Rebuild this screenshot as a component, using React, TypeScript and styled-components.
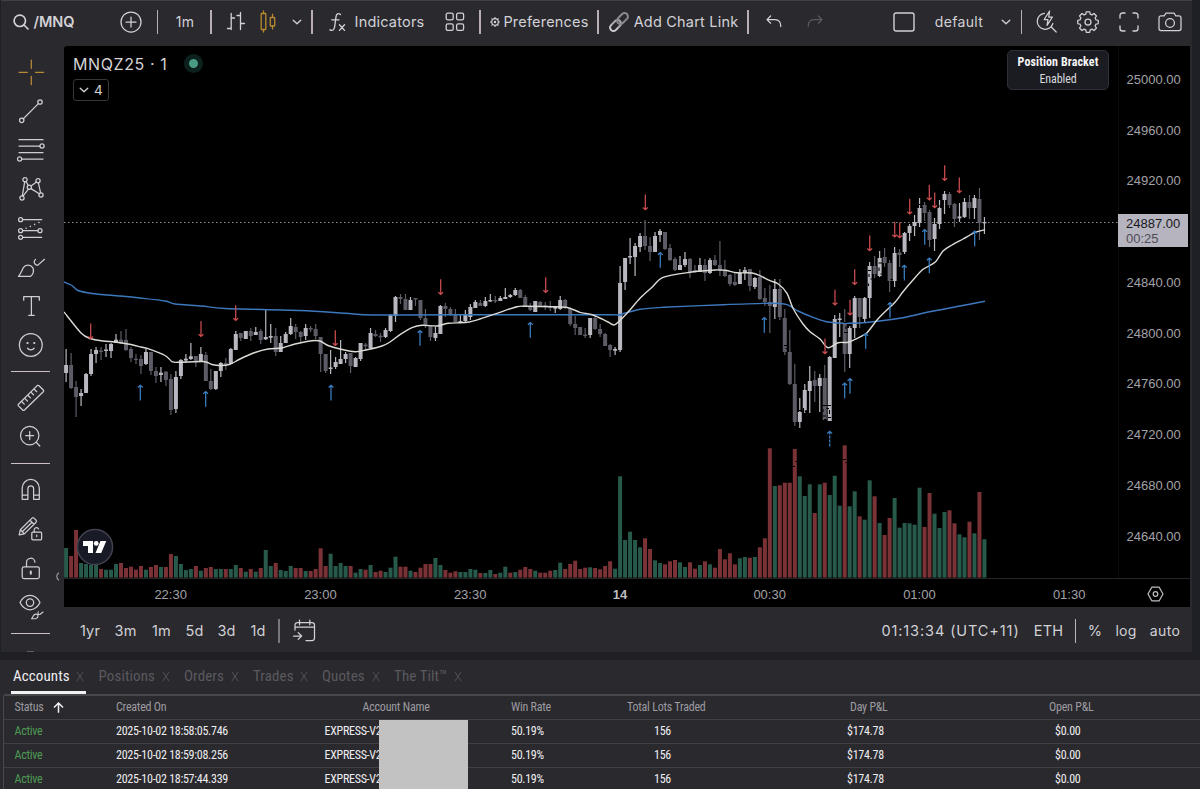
import React from "react";
import styled, { createGlobalStyle } from "styled-components";

const UI = `Inter, "Liberation Sans", sans-serif`;
const AXIS = `"Liberation Sans", Arial, sans-serif`;
const COND = `"Roboto Condensed", Roboto, sans-serif`;

const GlobalStyle = createGlobalStyle`
  *, *::before, *::after { box-sizing: border-box; }
  body { margin: 0; background: #1f2026; overflow: hidden; }
  svg { display: block; }
`;

const Page = styled.div`
  width: 1200px;
  height: 789px;
  display: flex;
  flex-direction: column;
  gap: 8px;
  overflow: hidden;
  background: #1f2026;
  color: #d6d5da;
  font-family: ${UI};
`;

const ChartPanel = styled.section`
  flex: none;
  width: 1191px;
  height: 652px;
  margin-left: 1px;
  display: flex;
  flex-direction: column;
  background: #2a292e;
  border-top: 1px solid #414045;
  overflow: hidden;
`;

const Toolbar = styled.header`
  flex: none;
  height: 45px;
  display: flex;
  align-items: center;
  padding: 0 0 4px 12px;
`;

const Slot = styled.div<{ $w: number; $ml?: number; $dim?: boolean }>`
  flex: none;
  width: ${(p) => p.$w}px;
  height: 28px;
  margin-left: ${(p) => p.$ml ?? 0}px;
  display: flex;
  align-items: center;
  justify-content: center;
  white-space: nowrap;
  color: ${(p) => (p.$dim ? "#5b5a60" : "#d2d1d6")};
`;

const ToolText = styled.span<{ $size?: number; $weight?: number; $ls?: number }>`
  font-size: ${(p) => p.$size ?? 14.5}px;
  font-weight: ${(p) => p.$weight ?? 400};
  letter-spacing: ${(p) => p.$ls ?? 0.2}px;
  line-height: 20px;
`;

const Divider = styled.i<{ $ml: number; $color?: string }>`
  flex: none;
  width: 1.5px;
  height: 24px;
  margin-left: ${(p) => p.$ml}px;
  background: ${(p) => p.$color ?? "#b9adb7"};
`;

const Body = styled.div`
  flex: 1;
  display: flex;
  min-height: 0;
`;

const Sidebar = styled.nav`
  position: relative;
  flex: none;
  width: 63px;
  padding: 6.5px 4px 0 0;
  display: flex;
  flex-direction: column;
  align-items: center;
`;

const Tool = styled.div<{ $accent?: boolean }>`
  flex: none;
  height: 39px;
  display: flex;
  align-items: center;
  color: ${(p) => (p.$accent ? "#b88a35" : "#cfced3")};
`;

const ToolRule = styled.i`
  flex: none;
  width: 39px;
  height: 1.5px;
  margin: 6px 0 6.5px;
  background: #cbbfca;
`;

const MoreStub = styled.i`
  flex: none;
  width: 7px;
  height: 1.5px;
  margin-top: 10px;
  background: #5f5e64;
`;

const CollapseMark = styled.div`
  position: absolute;
  left: 53px;
  top: 526px;
  color: #a3a2a8;
`;

const Main = styled.main`
  flex: 1;
  display: flex;
  flex-direction: column;
  min-width: 0;
`;

const ChartBox = styled.div`
  flex: none;
  width: 1126px;
  height: 561px;
  display: grid;
  grid-template-columns: 1054px 72px;
  grid-template-rows: 532px 29px;
  background: #000;
  border-radius: 3px 0 0 0;
  overflow: hidden;
`;

const Plot = styled.div`
  position: relative;
`;

const Legend = styled.div`
  position: absolute;
  left: 9px;
  top: 7px;
`;

const SymbolLine = styled.div`
  display: flex;
  align-items: center;
  height: 21px;
  font-size: 16px;
  letter-spacing: 0.6px;
  color: #d4d3d6;
`;

const LiveDot = styled.i`
  width: 19px;
  height: 19px;
  margin-left: 17px;
  border-radius: 50%;
  border: 5px solid #0c211d;
  background: #489a83;
`;

const IndicatorCount = styled.div`
  display: flex;
  align-items: center;
  gap: 5px;
  width: 36px;
  height: 22px;
  margin-top: 5px;
  padding-left: 5px;
  border: 1px solid #37363b;
  border-radius: 3px;
  font-size: 13.5px;
  color: #d4d3d6;
`;

const BracketBadge = styled.div`
  position: absolute;
  left: 943px;
  top: 4px;
  width: 102px;
  height: 40px;
  display: flex;
  flex-direction: column;
  align-items: center;
  justify-content: center;
  border: 1.5px solid #2f2f37;
  border-radius: 5px;
  background: #1b1b22;
  font-family: ${COND};
  font-stretch: 75%;
  font-size: 12px;
  line-height: 16.5px;
  letter-spacing: -0.1px;
  padding-top: 1px;
  color: #d9d9dc;
`;

const BadgeTitle = styled.strong`
  font-weight: 700;
  letter-spacing: 0.1px;
  color: #f4f4f5;
`;

const BrandMark = styled.div`
  position: absolute;
  left: 11.5px;
  top: 482px;
`;

const PriceAxis = styled.div`
  position: relative;
  display: grid;
  grid-template-rows: repeat(10, 50.75px);
  align-content: start;
  padding: 8px 0 0 7.5px;
  border-left: 1px solid #0c0c0e;
  font-family: ${AXIS};
  font-size: 13px;
  color: #a3a2a7;
`;

const PriceLabel = styled.span`
  display: flex;
  align-items: center;
`;

const PriceTag = styled.div`
  position: absolute;
  left: -1px;
  top: 167.5px;
  width: 70px;
  height: 33px;
  padding: 2px 0 0 8px;
  background: #b6b4bf;
  font-size: 13px;
  line-height: 15px;
  color: #19191d;
`;

const Countdown = styled.div`
  font-size: 13px;
  color: #4e4d57;
`;

const TimeAxis = styled.div`
  display: grid;
  grid-template-columns: repeat(7, 149.75px);
  padding-left: 31.8px;
  border-top: 1px solid #26252a;
  font-family: ${AXIS};
  font-size: 13px;
  color: #a3a2a7;
  overflow: visible;
`;

const TimeLabel = styled.span<{ $bold?: boolean }>`
  display: flex;
  align-items: center;
  justify-content: center;
  padding-top: 2px;
  font-weight: ${(p) => (p.$bold ? 700 : 400)};
  color: ${(p) => (p.$bold ? "#bdbcc0" : "inherit")};
`;

const AxisCorner = styled.div`
  display: flex;
  align-items: center;
  justify-content: center;
  padding: 2px 0 0 3px;
  border-top: 1px solid #26252a;
  color: #bcbbc0;
`;

const RangeBar = styled.footer`
  flex: 1;
  display: flex;
  align-items: center;
  padding: 2px 1px 0 12px;
`;

const Spacer = styled.div`
  flex: 1;
`;

const TablePanel = styled.section`
  flex: 1;
  display: flex;
  flex-direction: column;
  background: #2a292e;
  font-family: ${COND};
  font-stretch: 75%;
`;

const Tabs = styled.div`
  flex: none;
  height: 34px;
  display: flex;
  padding-left: 11px;
`;

const Tab = styled.div<{ $w: number; $active?: boolean }>`
  flex: none;
  width: ${(p) => p.$w}px;
  padding: 1px 2px 0;
  display: flex;
  align-items: center;
  justify-content: space-between;
  border-bottom: 3px solid ${(p) => (p.$active ? "#f1f0f3" : "transparent")};
  margin-right: 10.5px;
  font-size: 15px;
  letter-spacing: 0.1px;
  white-space: nowrap;
  color: ${(p) => (p.$active ? "#efeef1" : "#5a595f")};
`;

const Close = styled.span`
  color: #58575d;
  display: flex;
  padding-top: 1px;
`;

const Table = styled.div`
  position: relative;
  flex: 1;
  margin-left: 3px;
  border: 1.5px solid #48474c;
  border-width: 2px 0 0 1.5px;
  border-radius: 3px 0 0 0;
`;

const Row = styled.div<{ $head?: boolean }>`
  height: 24px;
  display: grid;
  grid-template-columns: 101.5px 208.5px 186.5px 116px 220px 202px 1fr;
  align-items: center;
  padding: 0 0 1px 10.5px;
  border-bottom: 1.5px solid #414045;
  font-size: 12px;
  letter-spacing: ${(p) => (p.$head ? -0.22 : -0.27)}px;
  color: ${(p) => (p.$head ? "#9c9ba0" : "#efeef1")};
`;

const Cell = styled.span<{ $pad?: number; $good?: boolean }>`
  display: flex;
  align-items: center;
  gap: 9px;
  padding-left: ${(p) => p.$pad ?? 0}px;
  white-space: nowrap;
  color: ${(p) => (p.$good ? "#4f9a54" : "inherit")};
`;

const Redaction = styled.div`
  position: absolute;
  left: 374.5px;
  top: 24px;
  width: 89.5px;
  height: 80px;
  background: #c2c2c2;
`;

type IconProps = { w?: number; h?: number; vb?: string; sw?: number; children: React.ReactNode };
const Icon = ({ w = 28, h = 28, vb, sw = 1.25, children }: IconProps) => (
  <svg width={w} height={h} viewBox={vb ?? `0 0 ${w} ${h}`} fill="none" stroke="currentColor" strokeWidth={sw} strokeLinecap="round" strokeLinejoin="round">
    {children}
  </svg>
);

const Chevron = () => (
  <Icon w={10} h={6} sw={1.3}>
    <path d="M1.2 1.2 5 4.8 8.8 1.2" />
  </Icon>
);

const sideTools: React.ReactNode[][] = [
  [
    <path d="M2 14.3H10.3M18.5 14.3H26.7M14.3 2V10.3M14.3 18.3V26.7" />,
    <>
      <circle cx="4.7" cy="23.3" r="2.2" /><circle cx="23" cy="5" r="2.2" /><path d="M6.3 21.7 21.4 6.6" />
    </>,
    <>
      <path d="M2 3.7H26M2 10H23M2 16.7H26M4.7 23H26" /><circle cx="25" cy="10" r="2.1" /><circle cx="2.6" cy="23" r="2.1" />
    </>,
    <>
      <circle cx="8" cy="4.7" r="2.1" /><circle cx="21" cy="5.7" r="2.1" /><circle cx="12.3" cy="12.3" r="2.1" /><circle cx="5" cy="23" r="2.1" /><circle cx="24" cy="20" r="2.1" />
      <path d="M7.7 6.8 5.3 20.9M9.1 6.5 11.3 10.5M14 11 19.4 7M11.4 14.2 6 21.1M14 13.6 22.3 18.8M21.4 7.8 23.6 17.9" />
    </>,
    <>
      <circle cx="3.6" cy="5.7" r="2" /><circle cx="3.6" cy="16.7" r="2" /><circle cx="3.6" cy="23.3" r="2" /><circle cx="23" cy="16.7" r="2" />
      <path d="M5.6 5.7H24.7M5.6 16.7H21M5.6 23.3H24.7" /><path d="M9 14.3 23 8" strokeDasharray="0.1 4.6" strokeWidth="1.5" />
    </>,
    <>
      <path d="M1.5 23.4C4 20.5 4.6 17.8 6.3 14.7C8.6 11 13.6 11.3 15.7 14.6C17.6 18 16 21.6 13.4 23.4Z" />
      <path d="M18.5 6.4C16.4 8.5 16.8 11.6 20.6 12.4L27.5 6.3" />
    </>,
    <path d="M6.7 8.2V4.7H22.3V8.2M14.4 4.7V23.3M11.7 23.3H17.2" />,
    <>
      <circle cx="13.8" cy="14" r="11.4" /><path d="M10.5 17.2C12 19.4 15.7 19.4 17.2 17.2" /><path d="M10.5 12H10.6M17.2 12H17.3" strokeWidth="2.2" />
    </>,
  ],
  [
    <>
      <path d="M20.4 1.4Q21.2 1 22 1.8L26.3 6Q27 6.9 26.3 7.7L7.5 26Q6.5 26.8 5.7 26L1.5 21.9Q.8 21 1.5 20.2Z" />
      <path d="M4.9 17.7 7.3 20.1M8 14.6 10.4 17M11.1 11.5 13.5 13.9M14.2 8.4 16.6 10.8M17.3 5.3 19.7 7.7" />
    </>,
    <>
      <circle cx="12.7" cy="12.6" r="9.2" /><path d="M12.7 8.6V16.6M8.7 12.6H16.7M19.2 19.3 22.8 23" />
    </>,
  ],
  [
    <path d="M5.2 23.3V12A8.55 8.55 0 0 1 22.3 12V23.3H16.6V12.2A2.9 2.9 0 0 0 10.9 12.2V23.3ZM5.2 19H10.9M16.6 19H22.3" />,
    <>
      <path d="M2.2 19.8 3.3 14.8 15 3.1Q16 2.2 17 3.1L19.1 5.2Q20 6.2 19.1 7.2L7.3 18.9ZM13 5.2 17 9.2M3.3 14.8 7.3 18.9M5.2 16.8 15 7.2" />
      <rect x="14.8" y="17" width="9.8" height="7.8" rx="1" /><path d="M17.2 17V14.8A2.3 2.3 0 0 1 21.6 14M19.7 20.2V21.6" />
    </>,
    <>
      <rect x="5.2" y="12.8" width="17.1" height="11.8" rx="1.8" /><path d="M9.5 12.6V8.7A4.2 4.2 0 0 1 17.9 8.2" /><path d="M13.8 17.6V19.8" strokeWidth="2" />
    </>,
    <>
      <path d="M3 9.6C7.6 0 18.4 0 23 9.6C18.4 19.2 7.6 19.2 3 9.6Z" /><circle cx="13" cy="9.6" r="3.7" />
      <path d="M14.5 25.8C16.3 24 16 21.5 18.5 21.1C21.8 21 22 24.6 18.8 25.6ZM21.2 18.7C20.5 21 22 22 23.2 21.2L26 19" strokeWidth="1.1" />
    </>,
  ],
];

/* One entry per minute: direction (l rising, d falling), high, body top, body bottom, low. */
const CANDLES = `
l349,365,373,382 d353,365,388,389 d381,387,397,417 l389,393,396,406 l373,374,393,393 l349,354,374,376 l347,350,354,363 d347,350.5,352,360
l344,349.5,351,357 l343,344,351,358 l334,339.7,343,343 d331,339.7,343.3,344 d329,340,350,351 d347,349,358,362 d354,358.7,360,364 d355,359,366,374
l349,352,364,365 d352,352,371,375 d367,371,376,383 l367,372.7,375,382 d371,371.7,380,386 d374,379,410,415 l371,377,409,413 l359,360,376,379
l354,358.7,360.5,363 l343,356.3,359,360 d356,356,362,367 l347,354,362,362 d352,355,381,381 d369,381,389,390 l371,371,389,390 l362,363,371,377
d358,363,365,370 l348,349,364,364 l331,334,350,350 d333,333,338,341 l331,331,339,339 d328,331,336,341 l327,332,335,335 d329,331,340,344
l310,337,339.3,340 l324,336,337.7,343 d328,336,352,356 l336,343,352,352 l332,334,343,343 l318,326,334,335 d324,327,332,339 d331,332,337,343
l324,328,336,340 d326,328,329.5,332 d324,329,336,339 d337,337,354,372 d354,354,371,373 l350,367.5,369,374 l357,362,367,369 l340,359,364,364
l352,354,359,363 d353,353,366,373 l357,358,367,367 l343,343,359,361 d343,344.5,346.3,351 l328,333,348,348 d330,334,336,337 d333,335.7,337.3,342
l328,330,337,338 l314,315,331,332 l296,297,316,322 d294,297,299,304 d294,299,310,310 l297,300,310,310 d298,298,299.5,306 d300,300,318,320
d309,318,326,328 d326,326,337,341 l327,333,338,341 l305,306,334,334 d303,306,309,317 d307,309,314,316 d309,314,322,322 l314,321,323,323
l310,315,321,322 l304,307,317,320 l300,302,308,308 d300,303,306,306 l297,301,306,307 l294,300,301.5,302 d296,300,301.3,303 l296,298,301,301
l288,297,299,299 l294,295,297,298 l288,290,295,296 d289,290,298,298 d295,297,306,306 d303,306,310,311 l301,301,312,312 d301,302,306,306
d302,305,306.7,310 d301,306,308,311 l306,307,308.7,313 l296,300,309,310 d299,300,307,309 d307,308,324,326 d316,324,328,335 d327,327,335,335
d328,334.5,336,338 l318,318,335,338 d315,318,329,330 d324,329,334,337 d333,334,346,346 d344,345,350,357 l347,349,350.7,355 l266,283,350,352
l258,258,282,290 l238,256,257.5,264 l243,246,257,276 l233,236,247,252 d220,236,246,250 d237,246,252,261 l232,236,252,252 l229,231,235,242
d232,232,249,250 d244,248,260,261 d257,259,270,271 l256,265,270,270 l252,259,265,267 d258,259,272,278 d265,270,272,273 l258,265,272,272
d259,265,273,281 l258,260,273,274 d255,260,265,266 d241,265,271,276 d260,270,276,277 d274,275,284,286 d273,282,285,286 l269,273,284,284
l267,270,273,280 d269,269,286,291 l277,278,287,289 d270,277,299,300 d288,298,302,306 d285,302,306,333 l279,289,307,319 d279,289,317,320
d309,318,352,355 d330,352,384,385 d364,384,422,426 l398,412,422,428 l384,390,410,413 l366,381,391,413 d371,380,386,402 l374,378,386,412
d365,378,420,420 l356,357,421,421 l315,319,358,358 l313,318.5,320,337 d309,322,354,372 l326,328,354,368 l296,298,328,338 d298,298,317,328
l297,298,319,323 l262,266,298,318 d256,266,274,278 l251,258,276,277 d248,257,263,267 d260,263,281,292 l247,253,281,287 d249,252.5,255,267
l232,233,252,254 l224,226,233,241 l215,222,226,236 l198,208,223,227 d202,205,213,221 d210,212,240,247 l218,224,239,251 l200,208,224,229
l191,194,200,214 d192,194,205,208 d203,204,219,227 l203,216.5,218.3,222 l198,202,217,218 d195,202,208,219 l195,198,208,219 d188,199,223,240
l217,222,223.3,234`;

/* One entry per minute: bar colour (g up, r down) and the y of its top. */
const VOLUMES = `
g548 r556 r530 g563 g564 g565 g565 r569 g569.7 g569.7 g564 r563 r568 r566.7 r569.7 r566 g569.7 r567 r565 g567 r567 r554 g556 g564 g570 g569
r566 g570.7 r568 r567 g569 g569 r569 g569 g565 r568 g571.7 r569 g571.7 r568 g550 g566 r563 g570 g571 g566 r568 r568 g571 r571 r569 r548.3
r566 g553.7 g566 g563 g566 r566 g572.7 g569 r569.7 g565 r572 r570.7 g572 g567.7 g556.7 r566.7 r566.7 g570.7 r572 r567.7 r564 r564 g558 g565
r570 r572.7 r571.3 g572 g572 g569 g569.7 r573 g573 g570 r574 g572.7 g566.7 r572.7 g572 r569.7 r567 r569 g570.7 r572.7 r572.7 r570.7 g570
g562.7 r569 r564 r560.7 r569 r567.7 g567.3 r568 r569.3 r566 r561.3 g568.7 g476.3 g540 g531.7 g540 g547.3 r538.3 r549 g560.3 g563 r564.3
r561.3 r560 g562.3 g567 r562.3 r568.7 g565 r561.3 g564.3 r567.7 r549 r559.3 r553.3 r564.3 g558.3 g557 r557.7 g557 r547.3 r538.3 r448.3 g486
r485.3 r482.7 r482.7 r449 g476.3 g496 g484.3 r513 g484.3 r482.7 g495 g475.7 g505.7 r445.3 g506.3 g491.3 r516.3 g519.7 g480.3 r496.3 g523
r535 r518 g498 g527.7 g523 g523.3 g524.7 g487.7 r527 r493 g513.7 g528 g512 r510.3 r523.3 g534.3 g537.3 r521.7 g533.3 r492 g539.3`;

const SLOW_AVG: number[][] = [[64,282],[72,285.5],[78,290.5],[92,293.5],[120,296],[140,298],[165,301],[175,304],[202,306],[225,308.5],[300,310.5],[345,313.3],[373,315],[450,314.8],[610,314.7],[618,315],[640,309.3],[663,307.3],[723,304.7],[770,303.3],[787,304.7],[798,311],[813,317.3],[828,322],[850,323.3],[873,321.7],[903,317.7],[927,312.3],[960,306],[985,301.3]];
const FAST_AVG: number[][] = [[64,312],[81,333],[90,338.5],[103,341],[115,342],[128,344],[141,347],[148,348.7],[165,355.5],[172,361.6],[178,362.3],[203,361.5],[212,364.5],[220,365.5],[230,364.3],[240,359],[255,352.5],[268,349],[282,348],[295,344],[312,340.7],[320,341],[328,345.5],[338,348.5],[355,351.7],[367,349.7],[382,346],[390,342],[400,334.7],[412,327.7],[422,325.3],[437,326],[448,323.3],[467,322.3],[480,319],[497,313.3],[517,306.7],[527,306.3],[553,306.7],[568,307.7],[580,312.3],[593,315],[608,322],[615,324.7],[627,313.3],[640,298.3],[652,287.3],[663,277.3],[690,272.3],[715,270],[725,270.3],[737,272.7],[752,273],[760,275.7],[770,280.7],[778,283.7],[787,293.3],[793,308.3],[803,324],[810,331.7],[820,339],[828,347.7],[838,342.7],[848,342.3],[858,338],[867,332.7],[877,320],[885,311.7],[895,302.3],[903,291.7],[913,280],[923,269.3],[935,262.3],[943,251],[952,245],[963,239],[975,232.3],[985,229.7]];

const SELLS: number[][] = [[90.7,339],[201,336.7],[235.7,320.7],[335.3,345.7],[440.7,294.7],[545.7,292.7],[645.3,210],[825,354],[835,305.3],[850,315.3],[854.7,284.7],[869.7,251],[894.7,237.3],[899.7,238],[909.7,214.3],[929.3,200.3],[934.7,208],[944.7,180.7],[959.3,193]];
const BUYS: number[][] = [[140.3,385],[205.7,391.3],[331,385],[420,330.3],[530.3,322.3],[660.3,252.3],[764.3,317.3],[829.7,431],[844.7,382.7],[850,378.3],[865.7,333.3],[890,302.3],[904.3,265],[924.7,229.3],[929.3,257.7],[974.7,230.7]];

/* Small dark nicks left over the busiest bars. */
const NICKS = "M822.5 405.5H831M823 409V412M826.5 408.5H829M829.5 410V414M823 416H826M828 417.5H831M824 419.5H826.5M868 270.5H871M869 274V277M870.5 279H873M868.5 283.5V286M878.5 263H882M879 267.5V271M880.5 274H883M784 345.5H787M785.5 348.5H788M788.5 344V349M798 410.5H802M803.5 408V412M805 411.5H808M843.5 322.5H847M844 332.5H848M846 326V329M795.5 461.5H798M793 466.5H795M843 459.5H846M845.5 462.5H847.5M918 204.5H921M920 207.5H923M938 206H941.5M890.5 279.5H893M901 279.5H904M827.5 435H832M827.5 439H832M827.5 443H832";

const STEP = 4.991;
const barX = (i: number) => 66.1 + i * STEP;

const smooth = (pts: number[][]) => {
  let d = `M${pts[0][0]} ${pts[0][1]}`;
  for (let i = 0; i < pts.length - 1; i++) {
    const a = pts[Math.max(i - 1, 0)], b = pts[i], c = pts[i + 1], e = pts[Math.min(i + 2, pts.length - 1)];
    d += `C${b[0] + (c[0] - a[0]) / 7} ${b[1] + (c[1] - a[1]) / 7} ${c[0] - (e[0] - b[0]) / 7} ${c[1] - (e[1] - b[1]) / 7} ${c[0]} ${c[1]}`;
  }
  return d;
};

const candles = CANDLES.trim().split(/\s+/).map((c) => ({ up: c[0] === "l", v: c.slice(1).split(",").map(Number) }));
const volumes = VOLUMES.trim().split(/\s+/).map((c) => ({ up: c[0] === "g", y: Number(c.slice(1)) }));

const PriceChart = () => (
  <svg width="1054" height="532" viewBox="64 46 1054 532">
    {volumes.map((b, i) => (
      <rect key={i} x={barX(i) - 2} y={b.y} width="4" height={577.6 - b.y} fill={b.up ? "#285a4c" : "#7b3236"} />
    ))}
    <line x1="64" x2="1118" y1="222.5" y2="222.5" stroke="#8d8c91" strokeDasharray="1.5 2.5" />
    {candles.map(({ up, v }, i) => (
      <g key={i} fill={up ? "#b9b8c0" : "#5c5b66"}>
        <rect x={barX(i) - 0.6} y={v[0]} width="1.2" height={Math.max(v[3] - v[0], 1)} />
        <rect x={barX(i) - 2} y={v[1]} width="4" height={Math.max(v[2] - v[1], 1)} />
      </g>
    ))}
    <path d={smooth(SLOW_AVG)} fill="none" stroke="#3d78bd" strokeWidth="1.4" />
    <path d={smooth(FAST_AVG)} fill="none" stroke="#dcdbd6" strokeWidth="1.4" />
    {SELLS.map(([x, y], i) => (
      <path key={i} d={`M${x} ${y - 15.5}V${y}M${x - 2.4} ${y - 2.5}L${x} ${y - 0.3}L${x + 2.4} ${y - 2.5}`} fill="none" stroke="#cc4d50" strokeWidth="1.25" />
    ))}
    {BUYS.map(([x, y], i) => (
      <path key={i} d={`M${x} ${y + 15.5}V${y}M${x - 2.4} ${y + 2.5}L${x} ${y + 0.3}L${x + 2.4} ${y + 2.5}`} fill="none" stroke="#3c80c4" strokeWidth="1.25" />
    ))}
    <path d={NICKS} stroke="#000" strokeWidth="1.1" fill="none" />
  </svg>
);

const prices = ["25000.00", "24960.00", "24920.00", "", "24840.00", "24800.00", "24760.00", "24720.00", "24680.00", "24640.00"];
const times = ["22:30", "23:00", "23:30", "14", "00:30", "01:00", "01:30"];
const tabs: [string, number][] = [["Accounts", 75], ["Positions", 75], ["Orders", 58.5], ["Trades", 58.5], ["Quotes", 61.5], ["The Tilt™", 72]];
const created = ["2025-10-02 18:58:05.746", "2025-10-02 18:59:08.256", "2025-10-02 18:57:44.339"];

const gearPath = (() => {
  const teeth = 8;
  let d = "";
  for (let i = 0; i < teeth; i++) {
    const t = (i / teeth) * Math.PI * 2;
    [[-0.27, 8.2], [-0.17, 10.4], [0.17, 10.4], [0.27, 8.2]].forEach(([o, r], j) => {
      d += `${i === 0 && j === 0 ? "M" : "L"}${(12 + r * Math.sin(t + o)).toFixed(2)} ${(12 - r * Math.cos(t + o)).toFixed(2)}`;
    });
  }
  return d + "Z";
})();

export default function App() {
  return (
    <Page>
      <GlobalStyle />
      <ChartPanel>
        <Toolbar>
          <Slot $w={16}>
            <Icon w={16} h={16} sw={1.7}><circle cx="6.8" cy="6.8" r="5.7" /><path d="M11 11 15 15" /></Icon>
          </Slot>
          <Slot $w={42} $ml={4}><ToolText $size={14.5} $weight={600} $ls={0}>/MNQ</ToolText></Slot>
          <Slot $w={22} $ml={45}>
            <Icon w={22} h={22}><circle cx="11" cy="11" r="10" /><path d="M11 6V16M6 11H16" /></Icon>
          </Slot>
          <Divider $ml={14.5} />
          <Slot $w={24} $ml={15}><ToolText $size={14}>1m</ToolText></Slot>
          <Divider $ml={13} />
          <Slot $w={20} $ml={14.5}>
            <Icon w={20} h={22} sw={1.3}><path d="M5.2 2.5V18.5M5.2 7H8.5M1.5 17.5H5.2M14.5 1.5V18.5M11 4.5H14.5M14.5 12.5H18.5" /></Icon>
          </Slot>
          <Slot $w={18} $ml={12.5}>
            <Icon w={18} h={24} sw={1.3}>
              <g stroke="#b88a2f"><rect x="2.2" y="3.5" width="4.6" height="16" rx=".6" /><path d="M4.5 1V3.5M4.5 19.5V22M13.5 4.2V7.5M13.5 16V19" /><rect x="11.3" y="7.5" width="4.4" height="8.5" rx=".6" /></g>
            </Icon>
          </Slot>
          <Slot $w={10} $ml={15}><Chevron /></Slot>
          <Divider $ml={9.5} />
          <Slot $w={17} $ml={16.5}>
            <Icon w={17} h={20} sw={1.35}>
              <path d="M11.5 2.6C9.2.6 7.4 2 7 4.8L5.6 15C5.2 18 3.3 19.2 1 17.8M2.8 7.8H10M10.5 12.8 15.5 18.4M15.5 12.8 10.5 18.4" />
            </Icon>
          </Slot>
          <Slot $w={70} $ml={8.5}><ToolText $ls={0.2}>Indicators</ToolText></Slot>
          <Slot $w={20} $ml={20.5}>
            <Icon w={20} h={20} sw={1.3}>
              <rect x="1.2" y="1.2" width="7" height="6.6" rx="1.6" /><rect x="11.6" y="1.2" width="7" height="6.6" rx="1.6" /><rect x="1.2" y="11.8" width="7" height="6.6" rx="1.6" /><rect x="11.6" y="11.8" width="7" height="6.6" rx="1.6" />
            </Icon>
          </Slot>
          <Divider $ml={14} />
          <Slot $w={10} $ml={9.5}>
            <Icon w={10} h={10} sw={1.2}>
              <circle cx="5" cy="5" r="3.3" /><circle cx="5" cy="5" r=".6" fill="currentColor" />
              <path d="M5 .5V1M5 9V9.5M.5 5H1M9 5H9.5M1.8 1.8 2.2 2.2M7.8 7.8 8.2 8.2M8.2 1.8 7.8 2.2M2.2 7.8 1.8 8.2" />
            </Icon>
          </Slot>
          <Slot $w={86} $ml={3}><ToolText $ls={0.2}>Preferences</ToolText></Slot>
          <Divider $ml={8} />
          <Slot $w={20} $ml={10.5}>
            <Icon w={20} h={20} sw={2}>
              <g transform="rotate(-45 10 10)"><rect x="-1.2" y="6.6" width="12.6" height="6.8" rx="3.4" stroke="#aaa9ae" /><rect x="8.6" y="6.6" width="12.6" height="6.8" rx="3.4" stroke="#8a898f" /><path d="M5 13.4H2.2A3.4 3.4 0 0 1 2.2 6.6" stroke="#d8d7dc" strokeWidth="1" /></g>
            </Icon>
          </Slot>
          <Slot $w={106} $ml={4}><ToolText $ls={0.2}>Add Chart Link</ToolText></Slot>
          <Divider $ml={8} />
          <Slot $w={16} $ml={17}>
            <Icon w={16} h={13}><path d="M4.6 1 1 4.6 4.6 8.2M1.2 4.6H9C12.6 4.6 14.8 7.4 14.8 11.6" /></Icon>
          </Slot>
          <Slot $w={16} $ml={25} $dim>
            <Icon w={16} h={13}><path d="M11.4 1 15 4.6 11.4 8.2M14.8 4.6H7C3.4 4.6 1.2 7.4 1.2 11.6" /></Icon>
          </Slot>
          <Slot $w={22} $ml={70.5}><Icon w={22} h={20} sw={1.4}><rect x="1" y="1" width="20" height="18" rx="2" /></Icon></Slot>
          <Slot $w={50} $ml={19}><ToolText $size={14} $ls={0.35}>default</ToolText></Slot>
          <Slot $w={10} $ml={16.5}><Chevron /></Slot>
          <Divider $ml={10} />
          <Slot $w={22} $ml={14}>
            <Icon w={22} h={24}>
              <path d="M8.4 3.3A8 8 0 1 0 16.9 13.5M15 16.8 20.2 22" /><path d="M13.6 1 8.2 9.5H12L11 15.4 16.4 7H12.7Z" />
            </Icon>
          </Slot>
          <Slot $w={24} $ml={18}><Icon w={24} h={24}><path d={gearPath} /><circle cx="12" cy="12" r="3" /></Icon></Slot>
          <Slot $w={20} $ml={19}>
            <Icon w={20} h={20} sw={1.35}><path d="M1 6V3.5A2.5 2.5 0 0 1 3.5 1H6M14 1H16.5A2.5 2.5 0 0 1 19 3.5V6M19 14V16.5A2.5 2.5 0 0 1 16.5 19H14M6 19H3.5A2.5 2.5 0 0 1 1 16.5V14" /></Icon>
          </Slot>
          <Slot $w={24} $ml={18.5}>
            <Icon w={24} h={20}>
              <path d="M3 3.8H6.2L8 1H16L17.8 3.8H21A2 2 0 0 1 23 5.8V16.6A2 2 0 0 1 21 18.6H3A2 2 0 0 1 1 16.6V5.8A2 2 0 0 1 3 3.8Z" /><circle cx="12" cy="11" r="4.4" />
            </Icon>
          </Slot>
        </Toolbar>

        <Body>
          <Sidebar>
            {sideTools.map((group, g) => (
              <React.Fragment key={g}>
                {group.map((shape, i) => (
                  <Tool key={i} $accent={g === 0 && i === 0}><Icon>{shape}</Icon></Tool>
                ))}
                <ToolRule />
              </React.Fragment>
            ))}
            <MoreStub />
            <CollapseMark><Icon w={6} h={9} sw={1.1}><path d="M4.6 1C2.2 2.8 2.2 6.2 4.6 8" /></Icon></CollapseMark>
          </Sidebar>
          <Main>
            <ChartBox>
              <Plot>
                <PriceChart />
                <Legend>
                  <SymbolLine>MNQZ25 · 1<LiveDot /></SymbolLine>
                  <IndicatorCount><Chevron />4</IndicatorCount>
                </Legend>
                <BracketBadge><BadgeTitle>Position Bracket</BadgeTitle>Enabled</BracketBadge>
                <BrandMark>
                  <svg width="38" height="38" viewBox="0 0 38 38">
                    <circle cx="19" cy="19" r="17.6" fill="#181a25" stroke="#414150" strokeWidth="1.5" />
                    <path d="M7 13H17V25H12V18H7ZM24.5 13H30.3L25.2 25H19.5Z" fill="#fff" /><circle cx="20.2" cy="15.4" r="2.4" fill="#fff" />
                  </svg>
                </BrandMark>
              </Plot>
              <PriceAxis>
                {prices.map((p, i) => <PriceLabel key={i}>{p}</PriceLabel>)}
                <PriceTag>24887.00<Countdown>00:25</Countdown></PriceTag>
              </PriceAxis>
              <TimeAxis>
                {times.map((t) => <TimeLabel key={t} $bold={t === "14"}>{t}</TimeLabel>)}
              </TimeAxis>
              <AxisCorner>
                <Icon w={17} h={16}><path d="M4.8 1.2H12.2L16 8 12.2 14.8H4.8L1 8Z" /><circle cx="8.5" cy="8" r="2.3" /></Icon>
              </AxisCorner>
            </ChartBox>
            <RangeBar>
              <Slot $w={28}><ToolText>1yr</ToolText></Slot>
              <Slot $w={28} $ml={7.5}><ToolText>3m</ToolText></Slot>
              <Slot $w={28} $ml={8}><ToolText>1m</ToolText></Slot>
              <Slot $w={28} $ml={5}><ToolText>5d</ToolText></Slot>
              <Slot $w={28} $ml={4}><ToolText>3d</ToolText></Slot>
              <Slot $w={28} $ml={3.5}><ToolText>1d</ToolText></Slot>
              <Divider $ml={6} $color="#78777c" />
              <Slot $w={24} $ml={12.5}>
                <Icon w={24} h={24}><path d="M3 11V6A2.5 2.5 0 0 1 5.5 3.5H20A2.5 2.5 0 0 1 22.5 6V19A2.5 2.5 0 0 1 20 21.5H14M3 8.2H22.5M7.5 1.2V5.8M17.8 1.2V5.8M1.5 17H9.5M6.2 13.6 9.6 17 6.2 20.4" /></Icon>
              </Slot>
              <Spacer />
              <Slot $w={140}><ToolText $size={14.5} $ls={0.9}>01:13:34 (UTC+11)</ToolText></Slot>
              <Slot $w={32} $ml={12}><ToolText $size={14.5}>ETH</ToolText></Slot>
              <Divider $ml={10} $color="#b9b8bd" />
              <Slot $w={16} $ml={11}><ToolText>%</ToolText></Slot>
              <Slot $w={24} $ml={11}><ToolText $size={14}>log</ToolText></Slot>
              <Slot $w={34} $ml={10}><ToolText $size={14} $ls={0.35}>auto</ToolText></Slot>
              <Slot $w={9}>{null}</Slot>
            </RangeBar>
          </Main>
        </Body>
      </ChartPanel>

      <TablePanel>
        <Tabs>
          {tabs.map(([name, w], i) => (
            <Tab key={name} $w={w} $active={i === 0}>
              {name}
              <Close><Icon w={8} h={11} sw={0.9}><path d="M1 1 7 10M7 1 1 10" /></Icon></Close>
            </Tab>
          ))}
        </Tabs>
        <Table>
          <Row $head>
            <Cell>
              Status
              <svg width="11" height="11" viewBox="0 0 11 11" fill="none" stroke="#f1f0f3" strokeWidth="1.5"><path d="M5.5 10.8V1.2M1 5.5 5.5 1 10 5.5" /></svg>
            </Cell>
            <Cell>Created On</Cell>
            <Cell $pad={38}>Account Name</Cell>
            <Cell>Win Rate</Cell>
            <Cell>Total Lots Traded</Cell>
            <Cell $pad={3}>Day P&amp;L</Cell>
            <Cell>Open P&amp;L</Cell>
          </Row>
          {created.map((date) => (
            <Row key={date}>
              <Cell $good>Active</Cell>
              <Cell>{date}</Cell>
              <Cell>EXPRESS-V2</Cell>
              <Cell>50.19%</Cell>
              <Cell $pad={27}>156</Cell>
              <Cell>$174.78</Cell>
              <Cell $pad={6}>$0.00</Cell>
            </Row>
          ))}
          <Redaction />
        </Table>
      </TablePanel>
    </Page>
  );
}
